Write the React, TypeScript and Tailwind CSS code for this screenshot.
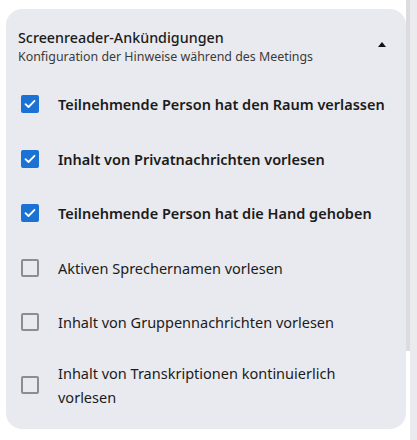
import { useState } from "react";

const items = [
  { label: "Teilnehmende Person hat den Raum verlassen", checked: true },
  { label: "Inhalt von Privatnachrichten vorlesen", checked: true },
  { label: "Teilnehmende Person hat die Hand gehoben", checked: true },
  { label: "Aktiven Sprechernamen vorlesen", checked: false },
  { label: "Inhalt von Gruppennachrichten vorlesen", checked: false },
  { label: "Inhalt von Transkriptionen kontinuierlich vorlesen", checked: false },
];

const Check = ({ on }: { on: boolean }) =>
  on ? (
    <span className="flex h-[18px] w-[18px] shrink-0 items-center justify-center rounded-[2px] bg-[#1a72d4]">
      <svg width="12" height="10" viewBox="0 0 12 10" fill="none">
        <path d="M1.5 5.2 4.5 8 10.5 1.8" stroke="white" strokeWidth="1.8" strokeLinecap="round" strokeLinejoin="round" />
      </svg>
    </span>
  ) : (
    <span className="h-[18px] w-[18px] shrink-0 rounded-[2px] border-2 border-[#8d8d8f]" />
  );

export default function App() {
  const [state, setState] = useState(items.map((i) => i.checked));

  return (
    <div className="flex h-[440px] bg-white font-['Noto_Sans',sans-serif]">
      <div className="flex-1 pl-[6px] pt-[9px]">
        <div className="h-[420px] w-[400px] rounded-2xl bg-[#e9eaef] px-3">
          {/* Header */}
          <div className="flex items-start justify-between pt-[19px]">
            <div>
              <h2 className="text-[14.3px] leading-5 font-medium text-[#1b1b1b]">Screenreader-Ankündigungen</h2>
              <p className="text-[12.4px] leading-[17px] text-[#3a3a3a]">Konfiguration der Hinweise während des Meetings</p>
            </div>
            <svg width="8" height="5" viewBox="0 0 8 5" className="mr-[8px] mt-[14px]">
              <path d="M0 5 4 0 8 5Z" fill="#111" />
            </svg>
          </div>

          <ul className="mt-[12px]">
            {items.map((item, i) => (
              <li
                key={item.label}
                onClick={() => setState((s) => s.map((v, j) => (j === i ? !v : v)))}
                className={`flex cursor-pointer items-center gap-[19px] pl-[3px] ${i === items.length - 1 ? "h-[71px]" : "h-[54.5px]"}`}
              >
                <Check on={state[i]} />
                <span className={`text-[14.5px] leading-6 text-[#1b1b1b] ${state[i] ? "font-semibold" : "font-normal"}`}>
                  {item.label}
                </span>
              </li>
            ))}
          </ul>
        </div>
      </div>
      {/* Scrollbar */}
      <div className="w-[4px]">
        <div className="h-[351px] bg-[#dcdcde]" />
      </div>
      <div className="w-[7px] bg-[#ebebef]" />
    </div>
  );
}
